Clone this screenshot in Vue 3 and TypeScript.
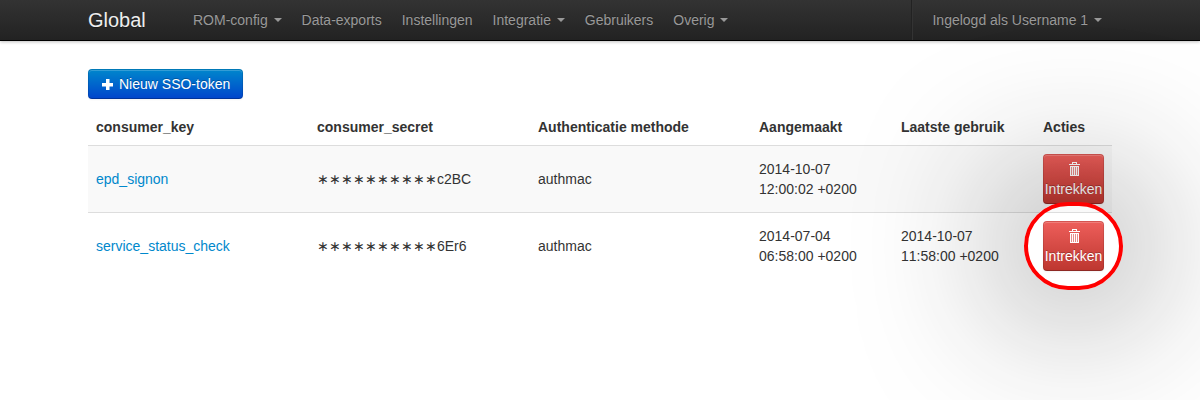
<script setup lang="ts">
interface NavItem { label: string; menu: boolean }
interface Token { key: string; secret: string; method: string; created: string[]; used: string[]; marked: boolean }

const nav: NavItem[] = [
  { label: 'ROM-config', menu: true },
  { label: 'Data-exports', menu: false },
  { label: 'Instellingen', menu: false },
  { label: 'Integratie', menu: true },
  { label: 'Gebruikers', menu: false },
  { label: 'Overig', menu: true },
]
const mask = '∗'.repeat(10)
const tokens: Token[] = [
  { key: 'epd_signon', secret: 'c2BC', method: 'authmac', created: ['2014-10-07', '12:00:02 +0200'], used: [], marked: false },
  { key: 'service_status_check', secret: '6Er6', method: 'authmac', created: ['2014-07-04', '06:58:00 +0200'], used: ['2014-10-07', '11:58:00 +0200'], marked: true },
]
</script>

<template>
  <div class="page">
    <header class="navbar">
      <div class="container bar">
        <a class="brand">Global</a>
        <nav class="nav">
          <a v-for="item in nav" :key="item.label" class="link">{{ item.label }}<b v-if="item.menu" class="caret"></b></a>
        </nav>
        <div class="divider"></div>
        <a class="link user">Ingelogd als Username 1<b class="caret"></b></a>
      </div>
    </header>
    <main class="container">
      <a class="btn primary">
        <svg class="plus" width="11" height="11" viewBox="0 0 11 11"><path d="M4 0h3.5v4H11v3.5H7.500V11H4V7.500H0V4h4z" /></svg>
        <span>Nieuw SSO-token</span>
      </a>
      <table class="table">
        <colgroup><col class="wide" /><col class="wide" /><col class="wide" /><col class="date" /><col class="date" /><col class="act" /></colgroup>
        <thead>
          <tr><th>consumer_key</th><th>consumer_secret</th><th>Authenticatie methode</th><th>Aangemaakt</th><th>Laatste gebruik</th><th>Acties</th></tr>
        </thead>
        <tbody>
          <tr v-for="t in tokens" :key="t.key">
            <td><a class="key">{{ t.key }}</a></td>
            <td><span class="mask">{{ mask }}</span>{{ t.secret }}</td>
            <td>{{ t.method }}</td>
            <td><div v-for="line in t.created" :key="line" class="stamp">{{ line }}</div></td>
            <td><div v-for="line in t.used" :key="line" class="stamp">{{ line }}</div></td>
            <td>
              <div class="action">
                <a class="btn danger">
                  <svg class="trash" width="11" height="14" viewBox="0 0 11 14" shape-rendering="crispEdges">
                    <path d="M1 4h9v9H1z" fill-opacity="0.35" />
                    <path fill-rule="evenodd" d="M3 0h5v2h3v1H0V2h3zM4 1v1h3V1zM1 4h9v10H1zM2 5v8h1V5zM4 5v8h1V5zM6 5v8h1V5zM8 5v8h1V5z" />
                  </svg>
                  <span>Intrekken</span>
                </a>
                <div v-if="t.marked" class="ring"></div>
              </div>
            </td>
          </tr>
        </tbody>
      </table>
    </main>
  </div>
</template>

<style>
body { margin: 0; background: #fff; overflow: hidden; }
</style>

<style scoped>
.page { position: relative; height: 400px; overflow: hidden; font: 14px/20px "Liberation Sans", Arial, sans-serif; color: #333; }
.container { width: 1024px; margin: 0 auto; }
.navbar { height: 40px; background: linear-gradient(#333, #222); border-bottom: 1px solid #000; box-shadow: 0 1px 3px rgba(0, 0, 0, 0.25); }
.bar { display: flex; height: 40px; }
.brand { width: 95px; padding: 10px 0; font-size: 20px; color: #eee; text-shadow: 0 1px 0 rgba(0, 0, 0, 0.3); }
.nav { display: flex; flex: 1; }
.link { padding: 10px; color: #999; white-space: nowrap; text-shadow: 0 -1px 0 rgba(0, 0, 0, 0.25); }
.divider { width: 1px; margin-right: 9.5px; border-left: 1px solid #222; background: #333; }
.caret { display: inline-block; margin: 8px 0 0 5.89px; vertical-align: top; border-top: 4px solid #999; border-left: 4px solid transparent; border-right: 4px solid transparent; }
main { padding-top: 28px; }
.btn { display: inline-flex; box-sizing: border-box; align-items: center; border: 1px solid; border-radius: 4px; color: #fff; white-space: nowrap; text-shadow: 0 -1px 0 rgba(0, 0, 0, 0.25); box-shadow: inset 0 1px 0 rgba(255, 255, 255, 0.2), 0 1px 2px rgba(0, 0, 0, 0.05); }
.btn svg { flex: none; fill: #fff; }
.primary { height: 30px; width: 155px; padding: 0 12px; background: linear-gradient(#08c, #04c) border-box; border-color: rgba(0, 0, 0, 0.1) rgba(0, 0, 0, 0.1) rgba(0, 0, 0, 0.25); vertical-align: top; }
.plus { margin: 1px 6px 0 1px; }
.table { width: 1024px; margin-top: 10px; table-layout: fixed; border-collapse: collapse; }
.wide { width: 221px; }
.date { width: 142px; }
.act { width: 77px; }
th, td { padding: 8px; text-align: left; box-sizing: border-box; }
td { height: 67px; border-top: 1px solid #ddd; vertical-align: middle; }
tbody tr:first-child td { background: #f9f9f9; }
.key { color: #08c; }
.stamp { font-kerning: none; }
.action { position: relative; width: 61px; height: 50px; }
.danger { width: 61px; height: 50px; flex-direction: column; padding-top: 7px; background: linear-gradient(#ee5f5b, #bd362f) border-box; border-color: rgba(0, 0, 0, 0.1) rgba(0, 0, 0, 0.1) rgba(0, 0, 0, 0.25); }
.danger span { margin-top: 3px; }
.trash { margin-left: 2px; }
.ring { position: absolute; left: -19px; top: -19px; width: 91px; height: 80px; border: 4px solid #f00; border-radius: 50px; box-shadow: 0 0 160px rgba(0, 0, 0, 0.9); }
</style>
